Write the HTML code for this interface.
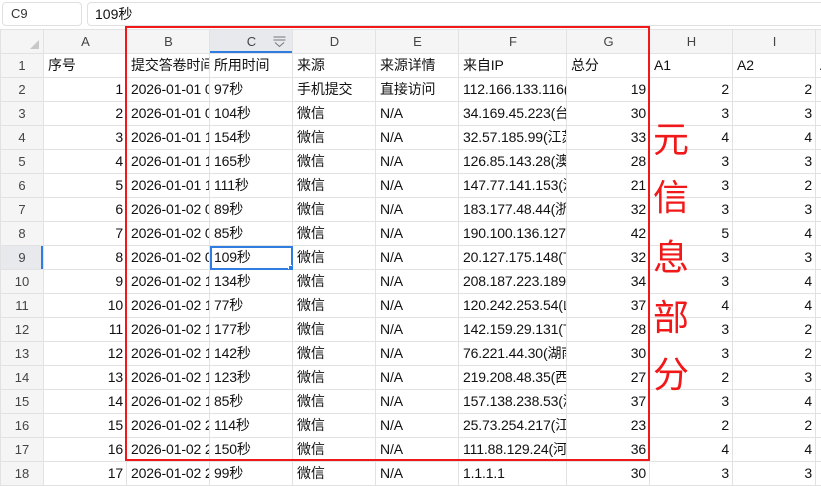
<!DOCTYPE html><html><head><meta charset="utf-8"><style>
body{margin:0;width:821px;height:467px;overflow:hidden;background:#fff;font-family:"Liberation Sans","Noto Sans CJK SC",sans-serif;position:relative}
.nb{position:absolute;left:2px;top:2px;border:1px solid #e0e0e0;border-radius:4px;font-size:13px;color:#333;line-height:22px;padding-left:8px;box-sizing:border-box;width:80px;height:24px}
.fb{position:absolute;left:87px;top:2px;width:740px;height:24px;border:1px solid #e0e0e0;border-radius:4px;box-sizing:border-box;font-size:14px;line-height:22px;padding-left:7px;color:#111}
table{position:absolute;left:0;top:29px;border-collapse:collapse;table-layout:fixed;width:845px}
td{height:23px;line-height:23px;vertical-align:middle;border:1px solid #e2e2e2;padding:0 3px 0 4px;font-size:14px;letter-spacing:-0.15px;white-space:nowrap;overflow:hidden;text-overflow:clip;color:#111}
tr.h td{background:#f5f5f5;text-align:center;font-size:13px;color:#444;letter-spacing:0}
td.r{background:#f5f5f5;text-align:center;font-size:13px;color:#444;padding:0;letter-spacing:0}
td.n{text-align:right}
.red{position:absolute;left:125px;top:26px;width:521px;height:431px;border:2px solid #f01818}
.big{position:absolute;left:653px;color:#f01818;font-size:36px;line-height:40px;font-family:"Noto Sans CJK SC",sans-serif}
</style></head><body>
<div class="nb">C9</div><div class="fb">109秒</div>
<table>
<colgroup><col style="width:43px"><col style="width:83px"><col style="width:83px"><col style="width:83px"><col style="width:83px"><col style="width:83px"><col style="width:108px"><col style="width:83px"><col style="width:83px"><col style="width:83px"><col style="width:30px"></colgroup>
<tr class="h"><td style="position:relative"><span style="position:absolute;right:4px;bottom:4px;width:0;height:0;border-left:9px solid transparent;border-bottom:9px solid #c8c8c8"></span></td><td>A</td><td>B</td><td style="background:#e8e9ec;box-shadow:inset 0 -2px 0 #2f7de1;position:relative">C<svg style="position:absolute;right:6px;top:6px" width="13" height="11" viewBox="0 0 13 11"><path d="M0.5 1h12M0.5 4h12M2 6.5l4.5 4l4.5-4" fill="none" stroke="#777" stroke-width="1"/></svg></td><td>D</td><td>E</td><td>F</td><td>G</td><td>H</td><td>I</td><td></td></tr>
<tr><td class="r">1</td><td>序号</td><td>提交答卷时间</td><td>所用时间</td><td>来源</td><td>来源详情</td><td>来自IP</td><td>总分</td><td>A1</td><td>A2</td><td>A</td></tr>
<tr><td class="r">2</td><td class="n">1</td><td>2026-01-01 0</td><td>97秒</td><td>手机提交</td><td>直接访问</td><td>112.166.133.116(</td><td class="n">19</td><td class="n">2</td><td class="n">2</td><td></td></tr>
<tr><td class="r">3</td><td class="n">2</td><td>2026-01-01 0</td><td>104秒</td><td>微信</td><td>N/A</td><td>34.169.45.223(台</td><td class="n">30</td><td class="n">3</td><td class="n">3</td><td></td></tr>
<tr><td class="r">4</td><td class="n">3</td><td>2026-01-01 1</td><td>154秒</td><td>微信</td><td>N/A</td><td>32.57.185.99(江苏</td><td class="n">33</td><td class="n">4</td><td class="n">4</td><td></td></tr>
<tr><td class="r">5</td><td class="n">4</td><td>2026-01-01 1</td><td>165秒</td><td>微信</td><td>N/A</td><td>126.85.143.28(澳</td><td class="n">28</td><td class="n">3</td><td class="n">3</td><td></td></tr>
<tr><td class="r">6</td><td class="n">5</td><td>2026-01-01 1</td><td>111秒</td><td>微信</td><td>N/A</td><td>147.77.141.153(河</td><td class="n">21</td><td class="n">3</td><td class="n">2</td><td></td></tr>
<tr><td class="r">7</td><td class="n">6</td><td>2026-01-02 0</td><td>89秒</td><td>微信</td><td>N/A</td><td>183.177.48.44(浙</td><td class="n">32</td><td class="n">3</td><td class="n">3</td><td></td></tr>
<tr><td class="r">8</td><td class="n">7</td><td>2026-01-02 0</td><td>85秒</td><td>微信</td><td>N/A</td><td>190.100.136.127(</td><td class="n">42</td><td class="n">5</td><td class="n">4</td><td></td></tr>
<tr><td class="r" style="background:#e8e9ec;box-shadow:inset -2px 0 0 #2f7de1">9</td><td class="n">8</td><td>2026-01-02 0</td><td style="outline:2px solid #2f7de1;outline-offset:-2px;position:relative">109秒<span style="position:absolute;right:-3px;bottom:-3px;width:5px;height:5px;background:#2f7de1;border:1px solid #fff"></span></td><td>微信</td><td>N/A</td><td>20.127.175.148(甘</td><td class="n">32</td><td class="n">3</td><td class="n">3</td><td></td></tr>
<tr><td class="r">10</td><td class="n">9</td><td>2026-01-02 1</td><td>134秒</td><td>微信</td><td>N/A</td><td>208.187.223.189(</td><td class="n">34</td><td class="n">3</td><td class="n">4</td><td></td></tr>
<tr><td class="r">11</td><td class="n">10</td><td>2026-01-02 1</td><td>77秒</td><td>微信</td><td>N/A</td><td>120.242.253.54(山</td><td class="n">37</td><td class="n">4</td><td class="n">4</td><td></td></tr>
<tr><td class="r">12</td><td class="n">11</td><td>2026-01-02 1</td><td>177秒</td><td>微信</td><td>N/A</td><td>142.159.29.131(甘</td><td class="n">28</td><td class="n">3</td><td class="n">2</td><td></td></tr>
<tr><td class="r">13</td><td class="n">12</td><td>2026-01-02 1</td><td>142秒</td><td>微信</td><td>N/A</td><td>76.221.44.30(湖南</td><td class="n">30</td><td class="n">3</td><td class="n">2</td><td></td></tr>
<tr><td class="r">14</td><td class="n">13</td><td>2026-01-02 1</td><td>123秒</td><td>微信</td><td>N/A</td><td>219.208.48.35(西</td><td class="n">27</td><td class="n">2</td><td class="n">3</td><td></td></tr>
<tr><td class="r">15</td><td class="n">14</td><td>2026-01-02 1</td><td>85秒</td><td>微信</td><td>N/A</td><td>157.138.238.53(湖</td><td class="n">37</td><td class="n">3</td><td class="n">4</td><td></td></tr>
<tr><td class="r">16</td><td class="n">15</td><td>2026-01-02 2</td><td>114秒</td><td>微信</td><td>N/A</td><td>25.73.254.217(江</td><td class="n">23</td><td class="n">2</td><td class="n">2</td><td></td></tr>
<tr><td class="r">17</td><td class="n">16</td><td>2026-01-02 2</td><td>150秒</td><td>微信</td><td>N/A</td><td>111.88.129.24(河</td><td class="n">36</td><td class="n">4</td><td class="n">4</td><td></td></tr>
<tr><td class="r">18</td><td class="n">17</td><td>2026-01-02 2</td><td>99秒</td><td>微信</td><td>N/A</td><td>1.1.1.1</td><td class="n">30</td><td class="n">3</td><td class="n">3</td><td></td></tr>
</table>
<div class="red"></div>
<div class="big" style="top:117px">元</div>
<div class="big" style="top:175px">信</div>
<div class="big" style="top:235px">息</div>
<div class="big" style="top:295px">部</div>
<div class="big" style="top:352px">分</div>
</body></html>
